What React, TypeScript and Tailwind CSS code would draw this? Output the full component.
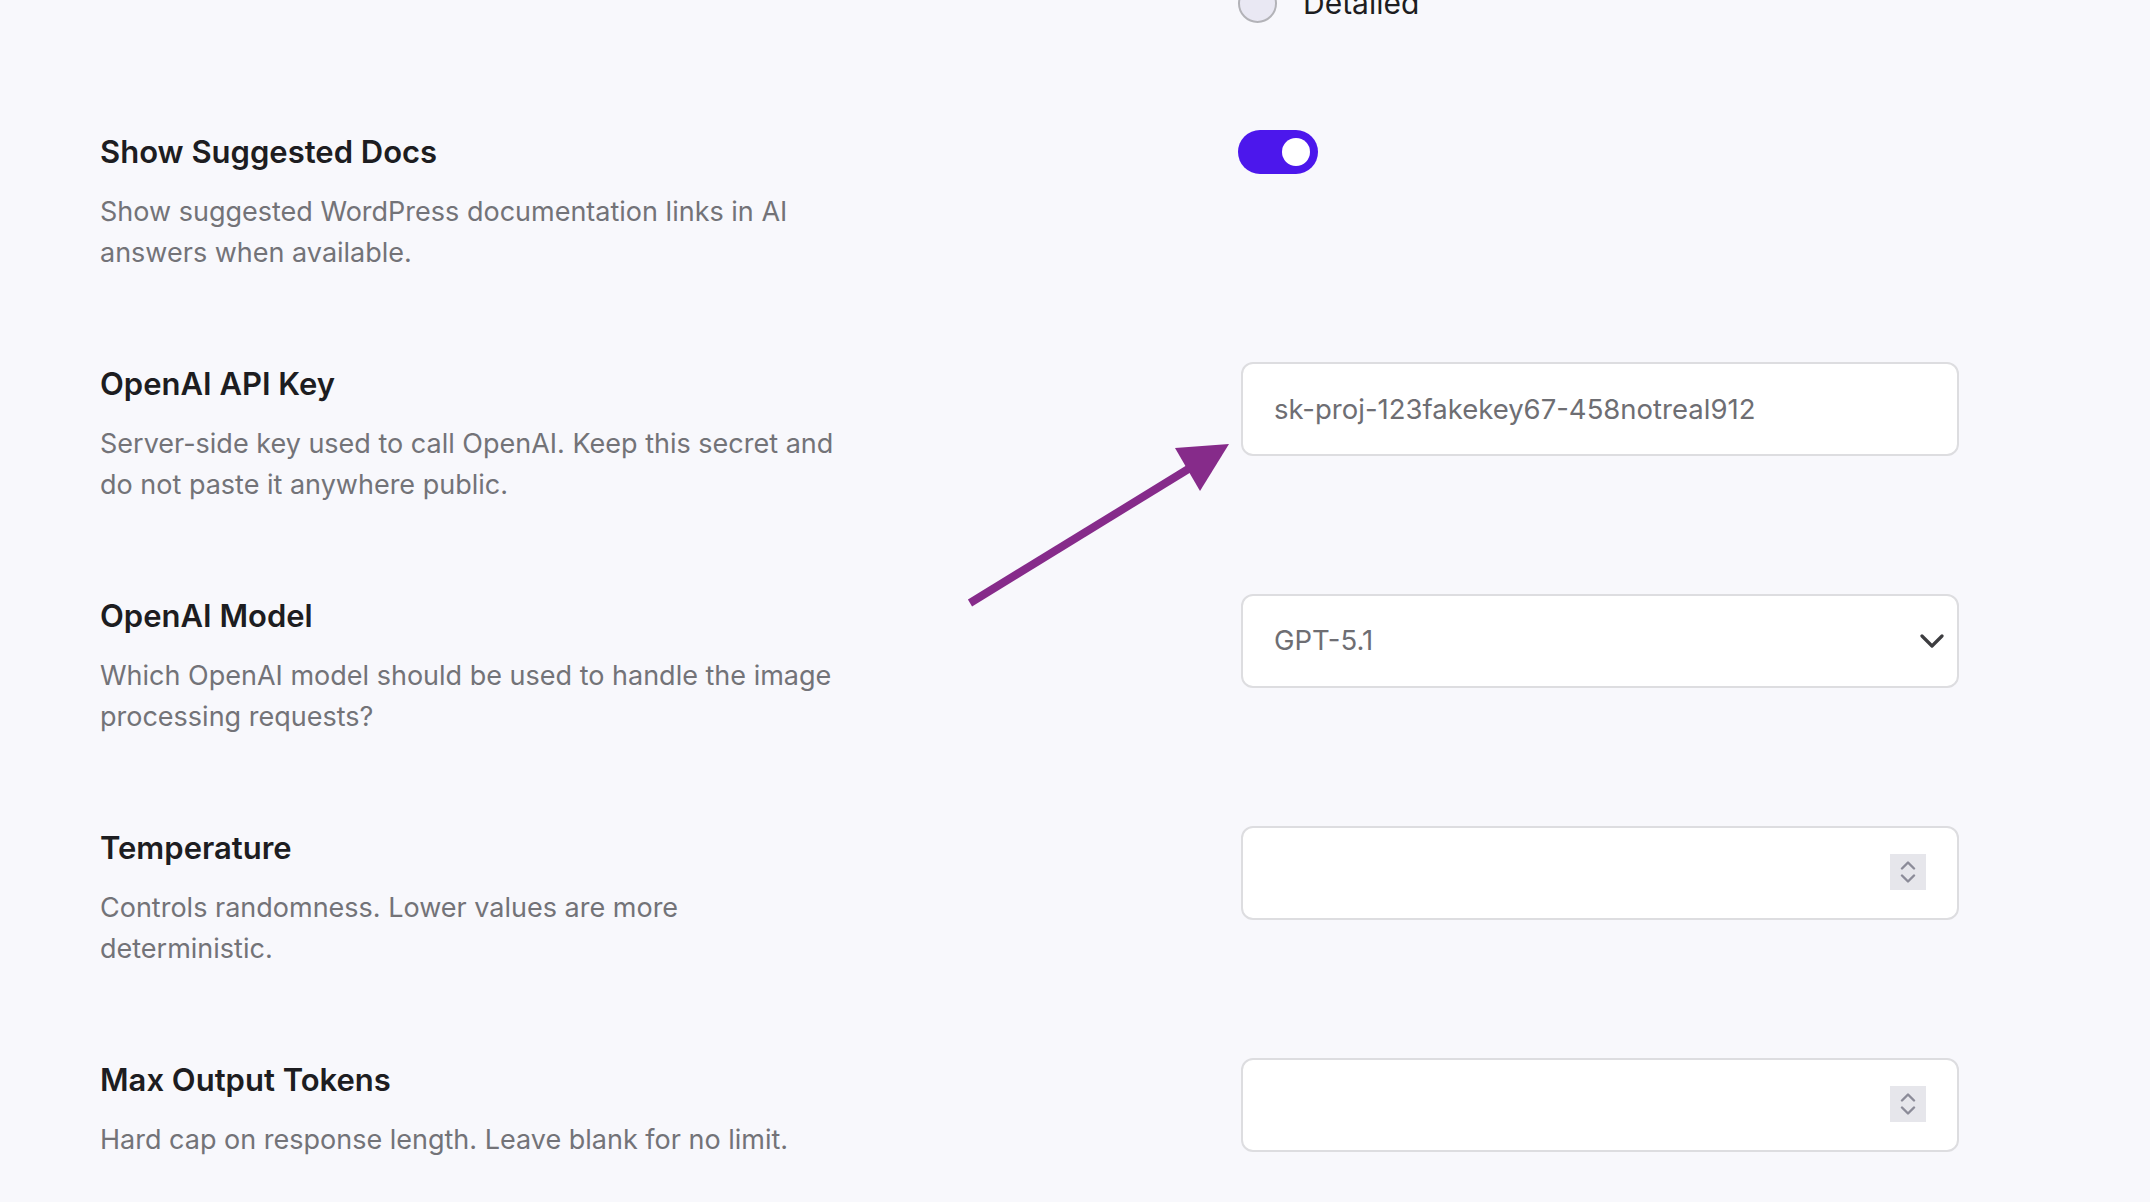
import React from "react";

type Row = {
  title: string;
  desc: string;
  control: React.ReactNode;
};

function Toggle({ on }: { on: boolean }) {
  return (
    <button
      type="button"
      className={`flex h-[44px] w-[80px] items-center rounded-full px-[8px] ${
        on ? "justify-end bg-[#4c17ec]" : "justify-start bg-[#d4d4dc]"
      }`}
    >
      <span className="block h-[28px] w-[28px] rounded-full bg-white" />
    </button>
  );
}

function TextField({ value }: { value: string }) {
  return (
    <input
      type="text"
      readOnly
      value={value}
      className="ml-[3px] h-[94px] w-[718px] rounded-[12px] border-2 border-[#dddde0] bg-white px-[31px] text-[27.5px] text-[#6e6e73] outline-none"
    />
  );
}

function SelectField({ value }: { value: string }) {
  return (
    <div className="relative ml-[3px] w-[718px]">
      <select
        defaultValue={value}
        className="h-[94px] w-full appearance-none rounded-[12px] border-2 border-[#dddde0] bg-white px-[31px] text-[27.5px] text-[#6e6e73] outline-none"
      >
        <option>GPT-5.1</option>
        <option>GPT-5</option>
        <option>GPT-4.1</option>
      </select>
      {/* chevron */}
      <svg
        className="pointer-events-none absolute right-[15px] top-[40px]"
        width="24"
        height="15"
        viewBox="0 0 24 15"
        fill="none"
      >
        <path d="M2 2l10 10 10-10" stroke="#3d3d40" strokeWidth="3.2" strokeLinecap="round" strokeLinejoin="round" />
      </svg>
    </div>
  );
}

function NumberField() {
  return (
    <div className="relative ml-[3px] w-[718px]">
      <input
        type="text"
        readOnly
        value=""
        className="h-[94px] w-full rounded-[12px] border-2 border-[#dddde0] bg-white px-[31px] text-[27.5px] text-[#6e6e73] outline-none"
      />
      {/* spinner */}
      <span className="pointer-events-none absolute right-[33px] top-[28px] flex h-[36px] w-[36px] flex-col items-center justify-center gap-[4px] bg-[#e6e6eb]">
        <svg width="16" height="9" viewBox="0 0 16 9" fill="none">
          <path d="M2 7.5l6-6 6 6" stroke="#8b8b98" strokeWidth="2.4" strokeLinecap="round" strokeLinejoin="round" />
        </svg>
        <svg width="16" height="9" viewBox="0 0 16 9" fill="none">
          <path d="M2 1.5l6 6 6-6" stroke="#8b8b98" strokeWidth="2.4" strokeLinecap="round" strokeLinejoin="round" />
        </svg>
      </span>
    </div>
  );
}

const rows: Row[] = [
  {
    title: "Show Suggested Docs",
    desc: "Show suggested WordPress documentation links in AI answers when available.",
    control: <Toggle on />,
  },
  {
    title: "OpenAI API Key",
    desc: "Server-side key used to call OpenAI. Keep this secret and do not paste it anywhere public.",
    control: <TextField value="sk-proj-123fakekey67-458notreal912" />,
  },
  {
    title: "OpenAI Model",
    desc: "Which OpenAI model should be used to handle the image processing requests?",
    control: <SelectField value="GPT-5.1" />,
  },
  {
    title: "Temperature",
    desc: "Controls randomness. Lower values are more deterministic.",
    control: <NumberField />,
  },
  {
    title: "Max Output Tokens",
    desc: "Hard cap on response length. Leave blank for no limit.",
    control: <NumberField />,
  },
];

export default function App() {
  return (
    <div className="relative min-h-[1202px] w-full overflow-hidden bg-[#f8f8fc] font-['Inter','Noto_Sans',sans-serif] text-[#1d1d21]">
      <div className="pl-[100px]">
        {/* tail of the previous setting: response style radios */}
        <div className="-mt-[16px] mb-[107px] grid grid-cols-[1138px_1fr]">
          <div />
          <label className="flex items-center gap-[26px]">
            <span className="block h-[39px] w-[39px] rounded-full border-2 border-[#b3b3b8] bg-[#e9e8f3]" />
            <span className="text-[30px] leading-[39px] text-[#1d1d21]">Detailed</span>
          </label>
        </div>

        <div className="flex flex-col gap-[89px]">
          {rows.map((row) => (
            <div key={row.title} className="grid grid-cols-[1138px_1fr] items-start">
              <div className="pt-[4px]">
                <h3 className="text-[31px] font-semibold leading-[36px] text-[#1d1d21]">{row.title}</h3>
                <p className="mt-[21px] max-w-[745px] text-[27px] leading-[41px] text-[#737378]">{row.desc}</p>
              </div>
              <div>{row.control}</div>
            </div>
          ))}
        </div>
      </div>

      {/* annotation arrow pointing at the API key field */}
      <svg
        className="pointer-events-none absolute left-[960px] top-[430px]"
        width="280"
        height="180"
        viewBox="0 0 280 180"
        fill="none"
      >
        <line x1="10" y1="173" x2="230" y2="38" stroke="#862b8a" strokeWidth="8" />
        <polygon points="269,14 215,18 240,61" fill="#862b8a" />
      </svg>
    </div>
  );
}
